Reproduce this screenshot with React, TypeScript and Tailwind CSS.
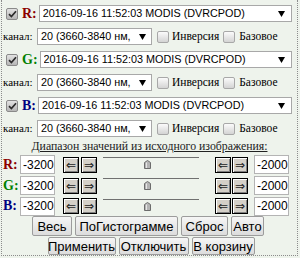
import React from 'react';

const sans = "font-['Liberation_Sans',Arial,sans-serif]";
const serif = "font-['Liberation_Serif','Times_New_Roman',serif]";

const channels = [
  { name: 'R:', color: 'text-[#8b0000]' },
  { name: 'G:', color: 'text-[#008000]' },
  { name: 'B:', color: 'text-[#000080]' },
];

function Check({ checked }: { checked?: boolean }) {
  return (
    <span
      className={`flex h-[12px] w-[12px] shrink-0 items-center justify-center rounded-[2px] border ${
        checked
          ? 'border-[#8a8a8a] bg-linear-to-b from-[#e2e2e2] to-[#b6b6b6]'
          : 'border-[#a8a8a8] bg-linear-to-b from-[#fbfbfb] to-[#d4d4d4]'
      }`}
    >
      {checked && (
        <svg width="9" height="8" viewBox="0 0 9 8">
          <path d="M1 4.2 L3.4 6.6 L8 1.2" fill="none" stroke="#2b2b2b" strokeWidth="1.7" />
        </svg>
      )}
    </span>
  );
}

function Select({ text, className }: { text: string; className: string }) {
  return (
    <div
      className={`flex h-[17px] items-center justify-between border border-[#a8a8a8] bg-white pl-[3px] ${sans} text-[10.8px] leading-none text-black ${className}`}
    >
      <span className="overflow-hidden whitespace-nowrap">{text}</span>
      <svg width="7" height="6" viewBox="0 0 7 6" className="shrink-0">
        <path d="M0 0H7L3.5 6Z" fill="#000" />
      </svg>
    </div>
  );
}

function Arrow({ left }: { left?: boolean }) {
  return (
    <span className="flex h-[16px] w-[16px] items-center justify-center border border-black bg-[#d4d0c8] shadow-[inset_1px_1px_0_#ffffff,inset_-1px_-1px_0_#808080]">
      <span className="font-['DejaVu_Sans',sans-serif] text-[12px] leading-none text-[#222]">
        {left ? '⇐' : '⇒'}
      </span>
    </span>
  );
}

function Thumb() {
  return (
    <svg width="7" height="9" viewBox="0 0 7 9" className="ml-[41px] mt-[2px] block">
      <path d="M0.5 8.5V2.5L3.5 0.5L6.5 2.5V8.5Z" fill="#b4b4b4" stroke="#6c6c6c" />
      <path d="M2.5 2.5V8" stroke="#e6e6e6" />
    </svg>
  );
}

function Btn({ children, className }: { children: React.ReactNode; className: string }) {
  return (
    <button
      className={`flex items-center justify-center rounded-[2px] border border-[#9c9c9c] bg-linear-to-b from-[#f6f6f6] to-[#dcdcdc] ${sans} text-[13px] leading-none whitespace-nowrap text-black ${className}`}
    >
      {children}
    </button>
  );
}

export default function App() {
  return (
    <div className="h-[258px] w-[300px] bg-[#eef3ec]">
      <div className="ml-px flex h-[256px] w-[297px] flex-col border-x border-b border-dotted border-[#8c8c8c] pt-[2px]">
        {channels.map((c) => (
          <React.Fragment key={c.name}>
            <div className="flex h-[23px] items-center">
              <span className="ml-[4px]">
                <Check checked />
              </span>
              <span className={`ml-[4px] ${serif} text-[14px] font-bold leading-none ${c.color}`}>{c.name}</span>
              <Select text="2016-09-16 11:52:03 MODIS (DVRCPOD)" className="ml-[2px] mr-[5px] flex-1 pr-[6px]" />
            </div>
            <div className="flex h-[23px] items-center">
              <span className={`w-[35px] pl-[1px] ${serif} text-[11px] leading-none text-black`}>канал:</span>
              <Select text="20 (3660-3840 нм," className="w-[115px] pr-[5px]" />
              <span className="ml-[5px]">
                <Check />
              </span>
              <span className={`ml-[3px] ${serif} text-[11.5px] leading-none text-black`}>Инверсия</span>
              <span className="ml-[4px]">
                <Check />
              </span>
              <span className={`ml-[4px] ${serif} text-[11.5px] leading-none text-black`}>Базовое</span>
            </div>
          </React.Fragment>
        ))}

        <div className={`h-[14px] text-center ${serif} text-[11.8px] leading-[12px] text-[#222] underline`}>
          Диапазон значений из исходного изображения:
        </div>

        {channels.map((c, i) => (
          <div key={c.name} className={`flex items-center ${i === 2 ? 'h-[20px]' : 'h-[21px]'}`}>
            <span className={`w-[18px] pl-[1px] ${serif} text-[14px] font-bold leading-none ${c.color}`}>{c.name}</span>
            <span className={`flex h-[19px] w-[35px] items-center border border-[#b4b4b4] bg-white pl-[2px] ${sans} text-[12px] leading-none text-black`}>
              -3200
            </span>
            <span className="ml-[8px] flex gap-[2px]">
              <Arrow left />
              <Arrow />
            </span>
            <div className="ml-[6px] w-[96px] self-stretch">
              <div className="mt-[3px] border-t border-[#707070]" />
              <Thumb />
            </div>
            <span className="ml-[16px] flex gap-[1px]">
              <Arrow left />
              <Arrow />
            </span>
            <span className={`ml-[6px] flex h-[19px] w-[35px] items-center border border-[#b4b4b4] bg-white pl-[2px] ${sans} text-[12px] leading-none text-black`}>
              -2000
            </span>
          </div>
        ))}

        <div className="flex h-[20px] justify-center gap-[3px] pr-[3px]">
          <Btn className="w-[40px]">Весь</Btn>
          <Btn className="w-[103px]">ПоГистограмме</Btn>
          <Btn className="w-[47px]">Сброс</Btn>
          <Btn className="w-[33px]">Авто</Btn>
        </div>
        <div className="mt-[1px] flex h-[18px] justify-center gap-[3px] pl-[3px]">
          <Btn className="w-[68px]">Применить</Btn>
          <Btn className="w-[70px]">Отключить</Btn>
          <Btn className="w-[63px]">В корзину</Btn>
        </div>
      </div>
    </div>
  );
}
